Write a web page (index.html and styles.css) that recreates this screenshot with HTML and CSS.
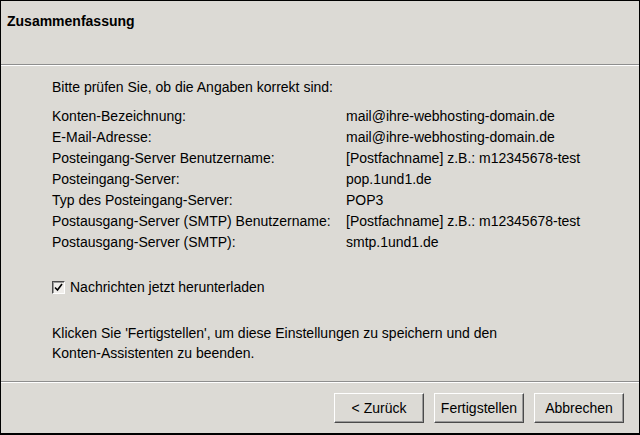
FILE: index.html
```html
<!DOCTYPE html>
<html lang="de">
  <head>
    <meta charset="UTF-8" />
    <meta name="viewport" content="width=device-width, initial-scale=1.0" />
    <title>Zusammenfassung</title>
    <link rel="stylesheet" href="styles.css">
  </head>
  <body>
    <div class="window">
      <!-- header -->
      <header class="header">
        <h1>Zusammenfassung</h1>
      </header>
      <!-- summary -->
      <section class="content">
        <p class="intro">Bitte prüfen Sie, ob die Angaben korrekt sind:</p>
        <div class="summary">
          <span>Konten-Bezeichnung:</span>
          <span>mail@ihre-webhosting-domain.de</span>
          <span>E-Mail-Adresse:</span>
          <span>mail@ihre-webhosting-domain.de</span>
          <span>Posteingang-Server Benutzername:</span>
          <span>[Postfachname] z.B.: m12345678-test</span>
          <span>Posteingang-Server:</span>
          <span>pop.1und1.de</span>
          <span>Typ des Posteingang-Server:</span>
          <span>POP3</span>
          <span>Postausgang-Server (SMTP) Benutzername:</span>
          <span>[Postfachname] z.B.: m12345678-test</span>
          <span>Postausgang-Server (SMTP):</span>
          <span>smtp.1und1.de</span>
        </div>
        <label class="check">
          <span class="box">
            <svg width="11" height="11" viewBox="0 0 11 11">
              <path d="M2 5.5 L4.5 8 L9 2" fill="none" stroke="#000" stroke-width="1.6" />
            </svg>
          </span>
          Nachrichten jetzt herunterladen
        </label>
        <p class="note">
          Klicken Sie 'Fertigstellen', um diese Einstellungen zu speichern und den<br />
          Konten-Assistenten zu beenden.
        </p>
      </section>
      <!-- buttons -->
      <footer class="footer">
        <button class="btn">&lt; Zurück</button>
        <button class="btn">Fertigstellen</button>
        <button class="btn">Abbrechen</button>
      </footer>
    </div>
  </body>
</html>
```

FILE: styles.css
```css
* {
  margin: 0;
  padding: 0;
  box-sizing: border-box;
}

body {
  font-family: "Liberation Sans", Arial, sans-serif;
  font-size: 14px;
  color: #000;
  background-color: #000;
}

.window {
  width: 640px;
  height: 435px;
  background-color: #dcdad5;
  border: 1px solid #000;
  border-bottom-width: 2px;
  display: flex;
  flex-direction: column;
}

.header {
  height: 64px;
  padding: 12px 6px 0;
  border-bottom: 1px solid #8e8e8e;
}

.header h1 {
  font-size: 14px;
  font-weight: bold;
  line-height: 17px;
}

.content {
  height: 317px;
  padding: 11px 0 0 51px;
  border-top: 1px solid #fff;
  border-bottom: 1px solid #8e8e8e;
}

.intro {
  line-height: 20px;
  margin-bottom: 9px;
}

.summary {
  display: grid;
  grid-template-columns: 294px auto;
  line-height: 21px;
}

.check {
  display: flex;
  align-items: center;
  gap: 5px;
  margin-top: 24px;
  line-height: 20px;
}

.box {
  width: 13px;
  height: 13px;
  display: flex;
  align-items: center;
  justify-content: center;
  border: 1px solid;
  border-color: #4a4a4a #fff #fff #4a4a4a;
  box-shadow: inset 1px 1px #9a9a9a;
  background-color: #f0eeeb;
}

.note {
  margin-top: 26px;
  line-height: 20px;
}

.footer {
  flex: 1;
  display: flex;
  justify-content: flex-end;
  gap: 10px;
  padding: 10px 15px 0 0;
  border-top: 1px solid #fff;
}

.btn {
  width: 90px;
  height: 30px;
  font-family: inherit;
  font-size: 14px;
  color: #000;
  background-color: #dcdad5;
  border: 1px solid;
  border-color: #fff #4a4a4a #4a4a4a #fff;
  box-shadow: inset -1px -1px #9a9a9a;
}
```
